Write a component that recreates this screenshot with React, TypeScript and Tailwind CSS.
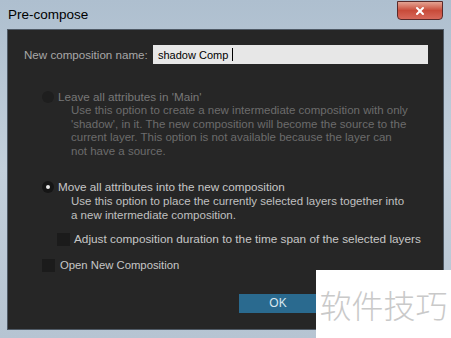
import { X } from 'lucide-react'

const ui = { fontFamily: '"Liberation Sans", Arial, sans-serif' }

function Radio({ on, disabled }: { on?: boolean; disabled?: boolean }) {
  return (
    <span
      className={`grid h-[12px] w-[12px] shrink-0 place-items-center rounded-full ${
        disabled ? 'bg-[#1e1e1e]' : 'bg-[#151515]'
      }`}
    >
      {on ? <span className="h-[4px] w-[4px] rounded-full bg-[#e8e8e8]" /> : null}
    </span>
  )
}

function Check() {
  return <span className="h-[13px] w-[13px] shrink-0 bg-[#1b1b1b]" />
}

export default function App() {
  return (
    <div
      className="relative h-[338px] w-[451px] overflow-hidden bg-gradient-to-b from-[#aebfcf] via-[#c3d0dc] to-[#b6c4d2]"
      style={ui}
    >
      {/* title bar */}
      <div className="flex h-[29px] items-start justify-between pl-[8px] pr-[8px]">
        <span className="pt-[6px] text-[13.5px] leading-[18px] text-black">Pre-compose</span>
        <button
          type="button"
          className="mt-[1px] grid h-[19px] w-[46px] place-items-center rounded-b-[4px] border border-[#5a2a2a] bg-gradient-to-b from-[#e3a393] via-[#c84b3a] to-[#d7685a]"
        >
          <X className="h-[12px] w-[12px] text-white" strokeWidth={4} />
        </button>
      </div>

      {/* dialog body */}
      <div className="mx-[7px] h-[301px] whitespace-nowrap border border-[#4f5a66] bg-[#262626] text-[11.7px] leading-[14px]">
        <div className="flex items-center pl-[16px] pt-[15px]">
          <span className="w-[129px] text-[11.6px] text-[#a8a8a8]">New composition name:</span>
          <div className="flex h-[19px] w-[275px] items-center bg-[#e7e7e7] pl-[5px] text-[11px] text-black">
            <span>shadow Comp</span>
            <span className="ml-[4px] h-[13px] w-[1px] bg-black" />
          </div>
        </div>

        <div className="mt-[26px] pl-[34px]">
          <div className="flex items-center gap-[4px] text-[#787878]">
            <Radio disabled />
            <span>Leave all attributes in 'Main'</span>
          </div>
          <div className="pl-[29px] text-[11.5px] leading-[13.5px] text-[#6c6c6c]">
            <p>Use this option to create a new intermediate composition with only</p>
            <p>'shadow', in it. The new composition will become the source to the</p>
            <p>current layer. This option is not available because the layer can</p>
            <p>not have a source.</p>
          </div>

          <div className="mt-[22px] flex items-center gap-[4px] text-[#c6c6c6]">
            <Radio on />
            <span>Move all attributes into the new composition</span>
          </div>
          <div className="mt-[1px] pl-[29px] text-[11.5px] leading-[13.5px] text-[#c0c0c0]">
            <p>Use this option to place the currently selected layers together into</p>
            <p>a new intermediate composition.</p>
          </div>

          <div className="mt-[10px] flex items-center gap-[4px] pl-[15px] text-[#c6c6c6]">
            <Check />
            <span className="text-[11.8px]">Adjust composition duration to the time span of the selected layers</span>
          </div>

          <div className="mt-[12px] flex items-center gap-[5px] pl-[-1px] text-[#c6c6c6]">
            <Check />
            <span className="text-[11.3px]">Open New Composition</span>
          </div>
        </div>

        <div className="mt-[22px] pl-[231px]">
          <button
            type="button"
            className="h-[19px] w-[78px] bg-[#2a6a8f] text-[12px] leading-[19px] text-[#d8e6ee]"
          >
            OK
          </button>
        </div>
      </div>

      {/* watermark */}
      <div className="absolute left-[316px] top-[270px] flex h-[68px] w-[135px] items-center justify-center bg-white">
        <span
          className="text-[32px] text-[#c9c9c9]"
          style={{ fontFamily: '"Noto Sans CJK SC", sans-serif', fontWeight: 300 }}
        >
          软件技巧
        </span>
      </div>
    </div>
  )
}
